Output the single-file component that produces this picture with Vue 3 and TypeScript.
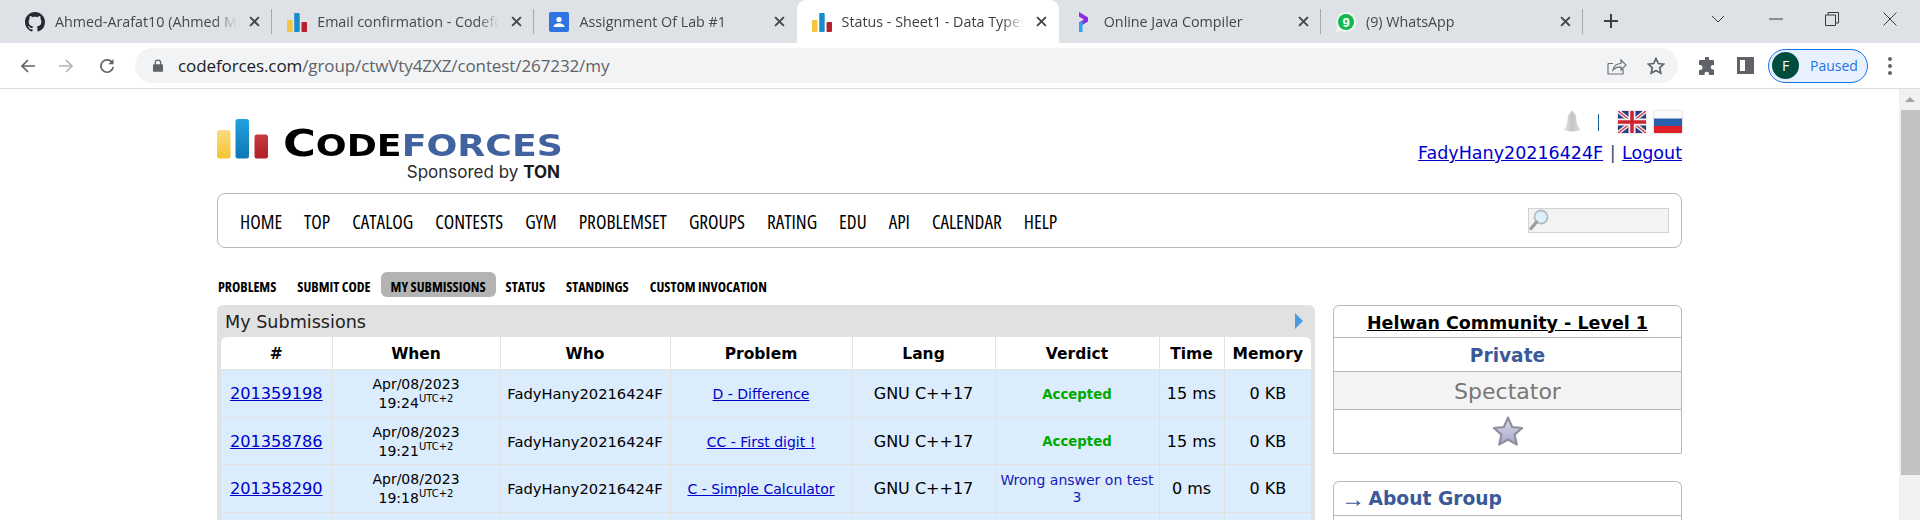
<script setup lang="ts">
interface Tab {
  title: string
  icon: string
  active?: boolean
  sep?: boolean
}

interface Submission {
  id: string
  day: string
  time: string
  who: string
  problem: string
  verdict: string
  accepted: boolean
  runtime: string
  memory: string
}

const tabs: Tab[] = [
  { title: 'Ahmed-Arafat10 (Ahmed M', icon: 'github', sep: true },
  { title: 'Email confirmation - Codefo', icon: 'bars', sep: true },
  { title: 'Assignment Of Lab #1', icon: 'classroom' },
  { title: 'Status - Sheet1 - Data Types', icon: 'bars', active: true },
  { title: 'Online Java Compiler', icon: 'programiz', sep: true },
  { title: '(9) WhatsApp', icon: 'whatsapp', sep: true },
]

const mainMenu = ['HOME', 'TOP', 'CATALOG', 'CONTESTS', 'GYM', 'PROBLEMSET', 'GROUPS', 'RATING', 'EDU', 'API', 'CALENDAR', 'HELP']
const subMenu = ['PROBLEMS', 'SUBMIT CODE', 'MY SUBMISSIONS', 'STATUS', 'STANDINGS', 'CUSTOM INVOCATION']

const rows: Submission[] = [
  { id: '201359198', day: 'Apr/08/2023', time: '19:24', who: 'FadyHany20216424F', problem: 'D - Difference', verdict: 'Accepted', accepted: true, runtime: '15 ms', memory: '0 KB' },
  { id: '201358786', day: 'Apr/08/2023', time: '19:21', who: 'FadyHany20216424F', problem: 'CC - First digit !', verdict: 'Accepted', accepted: true, runtime: '15 ms', memory: '0 KB' },
  { id: '201358290', day: 'Apr/08/2023', time: '19:18', who: 'FadyHany20216424F', problem: 'C - Simple Calculator', verdict: 'Wrong answer on test 3', accepted: false, runtime: '0 ms', memory: '0 KB' },
]

const columns = ['#', 'When', 'Who', 'Problem', 'Lang', 'Verdict', 'Time', 'Memory']
</script>

<template>
  <div class="window">
    <!-- tab strip -->
    <div class="tabstrip">
      <div v-for="tab in tabs" :key="tab.title" class="tab" :class="{ active: tab.active, sep: tab.sep }">
        <svg v-if="tab.icon === 'github'" class="favicon" viewBox="0 0 16 16"><path fill="#24292f" d="M8 0C3.58 0 0 3.58 0 8c0 3.54 2.29 6.53 5.47 7.59.4.07.55-.17.55-.38 0-.19-.01-.82-.01-1.49-2.01.37-2.53-.49-2.69-.94-.09-.23-.48-.94-.82-1.13-.28-.15-.68-.52-.01-.53.63-.01 1.08.58 1.23.82.72 1.21 1.87.87 2.33.66.07-.52.28-.87.51-1.07-1.78-.2-3.64-.89-3.64-3.95 0-.87.31-1.59.82-2.15-.08-.2-.36-1.02.08-2.12 0 0 .67-.21 2.2.82.64-.18 1.32-.27 2-.27.68 0 1.36.09 2 .27 1.53-1.04 2.2-.82 2.2-.82.44 1.1.16 1.92.08 2.12.51.56.82 1.27.82 2.15 0 3.07-1.87 3.75-3.65 3.95.29.25.54.73.54 1.48 0 1.07-.01 1.93-.01 2.2 0 .21.15.46.55.38A8.013 8.013 0 0016 8c0-4.42-3.58-8-8-8z" /></svg>
        <svg v-else-if="tab.icon === 'bars'" class="favicon" viewBox="0 0 20 20">
          <rect x="0" y="8" width="5.500" height="12" rx="1" fill="#f6c43d" />
          <rect x="7.200" y="1" width="5.500" height="19" rx="1" fill="#1b8bcb" />
          <rect x="14.500" y="10" width="5.500" height="10" rx="1" fill="#b8212b" />
        </svg>
        <svg v-else-if="tab.icon === 'classroom'" class="favicon" viewBox="0 0 20 20">
          <rect width="20" height="20" rx="2" fill="#2f74e0" />
          <circle cx="10" cy="7.500" r="2.600" fill="#fff" />
          <path fill="#fff" d="M4.500 15c0-2.600 3-3.800 5.500-3.800s5.500 1.200 5.500 3.800z" />
        </svg>
        <svg v-else-if="tab.icon === 'programiz'" class="favicon" viewBox="0 0 20 20">
          <path fill="#8a2be2" d="M5 0l9 5.500v4L5 15v-4.500l5-3-5-3z" />
          <path fill="#2aa4f4" d="M5 11l3.500-2v11H5z" />
        </svg>
        <svg v-else class="favicon" viewBox="0 0 20 20">
          <path fill="#eef6ef" d="M10 0a10 10 0 0 0-8.600 15L0 20l5.200-1.300A10 10 0 1 0 10 0z" />
          <circle cx="10" cy="10" r="8" fill="#12b84e" />
          <text x="10" y="14.500" class="wa-count">9</text>
        </svg>
        <span class="tab-title">{{ tab.title }}</span>
        <svg class="tab-close" viewBox="0 0 10 10"><path d="M1 1l8 8M9 1l-8 8" /></svg>
      </div>
      <svg class="new-tab" viewBox="0 0 16 16"><path d="M8 1v14M1 8h14" /></svg>
      <div class="window-btns">
        <svg class="win-ico chevron" viewBox="0 0 14 8"><path d="M1 1l6 6 6-6" /></svg>
        <svg class="win-ico minimize" viewBox="0 0 14 14"><path d="M0 7h14" /></svg>
        <svg class="win-ico restore" viewBox="0 0 14 14"><path d="M.5 3h10v10.500H.5zM3 3V.5h10.500V11H11" /></svg>
        <svg class="win-ico win-close" viewBox="0 0 14 14"><path d="M.5.5l13 13M13.500.5l-13 13" /></svg>
      </div>
    </div>

    <!-- toolbar -->
    <div class="toolbar">
      <svg class="nav-ico back" viewBox="0 0 16 16"><path d="M15 8H2M8 2L2 8l6 6" /></svg>
      <svg class="nav-ico forward" viewBox="0 0 16 16"><path d="M1 8h13M8 2l6 6-6 6" /></svg>
      <svg class="nav-ico reload" viewBox="0 0 16 16"><path d="M13.500 5A6.200 6.200 0 1 0 14.200 9" /><path class="fill" d="M14.500 1v5.200H9.300z" /></svg>
      <div class="omnibox">
        <svg class="lock" viewBox="0 0 12 15"><path d="M2 6V4.200a4 4 0 0 1 8 0V6h1a1 1 0 0 1 1 1v7a1 1 0 0 1-1 1H1a1 1 0 0 1-1-1V7a1 1 0 0 1 1-1zm1.500 0h5V4.200a2.500 2.500 0 0 0-5 0z" /></svg>
        <span class="url"><span class="host">codeforces.com</span>/group/ctwVty4ZXZ/contest/267232/my</span>
        <svg class="share" viewBox="0 0 20 18"><path d="M1 6.500v10.500h15v-5M1 6.500h5M6 13c1-4.500 4.500-6.500 8-6.500V3l5 5-5 5V9.800c-3 0-6 1-8 3.200z" /></svg>
        <svg class="star-outline" viewBox="0 0 18 18"><path d="M9 1.500l2.300 5 5.400.6-4 3.700 1.100 5.400L9 13.500l-4.800 2.700 1.100-5.400-4-3.700 5.400-.6z" /></svg>
      </div>
      <svg class="puzzle" viewBox="0 0 18 18"><path d="M7 1a2 2 0 0 1 4 0v2h4a1 1 0 0 1 1 1v4h-1a2.200 2.200 0 0 0 0 4.500h1V17a1 1 0 0 1-1 1h-4v-1a2.200 2.200 0 0 0-4.500 0v1H2a1 1 0 0 1-1-1v-4h1a2.500 2.500 0 0 0 0-5H1V4a1 1 0 0 1 1-1h5z" /></svg>
      <div class="side-panel"><span></span></div>
      <div class="profile">
        <span class="avatar">F</span>
        <span class="paused">Paused</span>
      </div>
      <div class="dots"><i></i><i></i><i></i></div>
    </div>

    <!-- page -->
    <div class="viewport">
      <div class="page">
        <header class="site-header">
          <div class="logo">
            <svg class="logo-bars" viewBox="0 0 51 40">
              <defs>
                <linearGradient id="barY" x1="0" y1="0" x2="0" y2="1"><stop offset="0" stop-color="#fbdc83" /><stop offset="1" stop-color="#f6c32f" /></linearGradient>
                <linearGradient id="barB" x1="0" y1="0" x2="0" y2="1"><stop offset="0" stop-color="#22a1dc" /><stop offset="1" stop-color="#0e76b9" /></linearGradient>
                <linearGradient id="barR" x1="0" y1="0" x2="0" y2="1"><stop offset="0" stop-color="#c73b3f" /><stop offset="1" stop-color="#b11e27" /></linearGradient>
              </defs>
              <rect x="0" y="11" width="13.500" height="28.500" rx="2.500" fill="url(#barY)" />
              <rect x="18.500" y="0" width="13.500" height="39.500" rx="2.500" fill="url(#barB)" />
              <rect x="37.500" y="15.500" width="13.500" height="24" rx="2.500" fill="url(#barR)" />
            </svg>
            <div class="wordmark">
              <div class="brand"><span class="brand-c">C</span><span class="brand-black">ODE</span><span class="brand-blue">FORCES</span></div>
              <div class="sponsor">Sponsored by <b>TON</b></div>
            </div>
          </div>
          <div class="user-area">
            <div class="icons-row">
              <svg class="bell" viewBox="0 0 18 22">
                <defs>
                  <linearGradient id="bellG" x1="0" y1="0" x2="1" y2="0"><stop offset="0" stop-color="#e8e8e8" /><stop offset=".5" stop-color="#c4c4c4" /><stop offset="1" stop-color="#dddddd" /></linearGradient>
                </defs>
                <path fill="url(#bellG)" d="M9 0c1 0 1.500.8 1.500 1.800C13 3 13.200 6 13.500 10c.2 3 1.500 6 3.500 8 .5 1.500-3 2.500-8 2.500S.5 19.500 1 18c2-2 3.300-5 3.500-8 .3-4 .5-7 3-8.200C7.500.8 8 0 9 0z" />
              </svg>
              <span class="bar"></span>
              <svg class="flag flag-uk" viewBox="0 0 28 22">
                <rect width="28" height="22" fill="#2a3a80" />
                <path d="M0 0l28 22M28 0L0 22" stroke="#eee" stroke-width="4" />
                <path d="M0 0l28 22M28 0L0 22" stroke="#d1323f" stroke-width="1.300" />
                <path d="M14 0v22M0 11h28" stroke="#f2f2f2" stroke-width="7" />
                <path d="M14 0v22M0 11h28" stroke="#d1222f" stroke-width="3.500" />
              </svg>
              <svg class="flag flag-ru" viewBox="0 0 28 22">
                <rect width="28" height="7.500" fill="#fafafa" />
                <rect y="7.500" width="28" height="7.500" fill="#2860ae" />
                <rect y="15" width="28" height="7" fill="#e01e26" />
              </svg>
            </div>
            <div class="user-links"><a>FadyHany20216424F</a><span class="pipe">|</span><a>Logout</a></div>
          </div>
        </header>

        <nav class="main-menu">
          <a v-for="item in mainMenu" :key="item">{{ item }}</a>
          <div class="search">
            <svg class="magnifier" viewBox="0 0 20 22">
              <circle cx="12" cy="8" r="6.500" fill="#dcf1fb" stroke="#b5bcc0" stroke-width="1.800" />
              <path d="M7.500 13L2 19.500" stroke="#9c9c9c" stroke-width="3.200" stroke-linecap="round" />
            </svg>
          </div>
        </nav>

        <nav class="sub-menu">
          <a v-for="item in subMenu" :key="item" :class="{ current: item === 'MY SUBMISSIONS' }">{{ item }}</a>
        </nav>

        <div class="columns">
          <section class="panel">
            <div class="panel-title">
              <span>My Submissions</span>
              <svg class="panel-arrow" viewBox="0 0 8 16"><path fill="#4a9be0" d="M0 0l8 8-8 8z" /></svg>
            </div>
            <table class="status">
              <colgroup>
                <col class="c1" /><col class="c2" /><col class="c3" /><col class="c4" />
                <col class="c5" /><col class="c6" /><col class="c7" /><col class="c8" />
              </colgroup>
              <thead>
                <tr><th v-for="col in columns" :key="col">{{ col }}</th></tr>
              </thead>
              <tbody>
                <tr v-for="row in rows" :key="row.id">
                  <td><a class="sub-id">{{ row.id }}</a></td>
                  <td class="when">{{ row.day }}<br />{{ row.time }}<sup>UTC+2</sup></td>
                  <td class="who">{{ row.who }}</td>
                  <td class="problem"><a>{{ row.problem }}</a></td>
                  <td class="lang">GNU C++17</td>
                  <td class="verdict" :class="row.accepted ? 'ok' : 'wrong'">{{ row.verdict }}</td>
                  <td class="lang">{{ row.runtime }}</td>
                  <td class="lang">{{ row.memory }}</td>
                </tr>
                <tr class="next"><td v-for="col in columns" :key="col"></td></tr>
              </tbody>
            </table>
          </section>

          <aside class="sidebar">
            <div class="box">
              <div class="box-row group-name"><a>Helwan Community - Level 1</a></div>
              <div class="box-row private">Private</div>
              <div class="box-row spectator">Spectator</div>
              <div class="box-row star-row">
                <svg class="fav-star" viewBox="0 0 30 30">
                  <defs>
                    <linearGradient id="starG" x1="0" y1="0" x2="0" y2="1"><stop offset="0" stop-color="#dcdce4" /><stop offset="1" stop-color="#a5a6d2" /></linearGradient>
                  </defs>
                  <path fill="url(#starG)" stroke="#8e8f9e" stroke-width="2" stroke-linejoin="round" d="M15 1.500l3.900 8.800 9.300.9-7 6.300 2.100 9.300-8.300-4.800-8.300 4.800 2.100-9.300-7-6.300 9.300-.9z" />
                </svg>
              </div>
            </div>
            <div class="box about">
              <div class="box-row about-title"><span class="arrow">→</span> About Group</div>
              <div class="box-row about-body"></div>
            </div>
          </aside>
        </div>
      </div>

      <div class="scrollbar">
        <div class="scroll-up"><i></i></div>
        <div class="scroll-thumb"></div>
      </div>
    </div>
  </div>
</template>

<style>
html, body { margin: 0; background: #fff; overflow: hidden; }
</style>

<style scoped>
.window { width: 1920px; height: 520px; overflow: hidden; display: flex; flex-direction: column; font-family: "DejaVu Sans", Verdana, sans-serif; color: #000; }

/* ---- tabs ---- */
.tabstrip { height: 43px; background: #dee1e6; display: flex; align-items: stretch; padding-left: 10px; flex: none; }
.tab { width: 262.2px; box-sizing: border-box; display: flex; align-items: center; padding: 0 12px 0 15px; position: relative; font: 14.300px "Open Sans", sans-serif; color: #45474a; flex: none; }
.tab.active { background: #fff; border-radius: 9px 9px 0 0; color: #3c4043; }
.tab.sep::after { content: ""; position: absolute; right: 0; top: 9px; height: 25px; width: 1px; background: #a5a8ad; }
.favicon { width: 20px; height: 20px; flex: none; margin-right: 10px; }
.wa-count { font: bold 13px "Liberation Sans", sans-serif; fill: #fff; text-anchor: middle; }
.tab-title { flex: 1; white-space: nowrap; overflow: hidden; -webkit-mask-image: linear-gradient(to right, #000 88%, transparent 100%); mask-image: linear-gradient(to right, #000 88%, transparent 100%); }
.tab-close { width: 11px; height: 11px; flex: none; margin-left: 12px; }
.tab-close path { stroke: #45474a; stroke-width: 1.800; fill: none; }
.new-tab { width: 16px; height: 16px; margin: 13px 0 0 20px; flex: none; }
.new-tab path { stroke: #3c4043; stroke-width: 2; fill: none; }
.window-btns { flex: 1; display: flex; align-items: flex-start; }
.win-ico { fill: none; stroke: #3a3b3d; stroke-width: 1; flex: none; }
.chevron { width: 14px; height: 8px; margin: 15px 0 0 92px; }
.minimize { width: 14px; height: 14px; margin: 12px 0 0 44px; }
.restore { width: 14px; height: 14px; margin: 12px 0 0 42px; }
.win-close { width: 14px; height: 14px; margin: 12px 0 0 44px; }

/* ---- toolbar ---- */
.toolbar { height: 45px; background: #fff; border-bottom: 1px solid #dadce0; display: flex; align-items: center; flex: none; padding-left: 20px; }
.nav-ico { width: 16px; height: 16px; fill: none; stroke: #5f6368; stroke-width: 1.700; flex: none; }
.nav-ico.forward { stroke: #b4b6b9; margin-left: 22px; }
.nav-ico.reload { margin-left: 25px; }
.nav-ico .fill { fill: #5f6368; stroke: none; }
.omnibox { margin-left: 20px; width: 1543px; height: 35px; box-sizing: border-box; border-radius: 18px; background: #f1f3f4; display: flex; align-items: center; padding-left: 18px; flex: none; }
.lock { width: 10px; height: 13px; fill: #5f6368; flex: none; }
.url { font: 17px "Open Sans", sans-serif; color: #5f6368; margin-left: 15px; flex: 1; letter-spacing: -.1px; }
.host { color: #202124; }
.share { width: 20px; height: 18px; fill: none; stroke: #6e7174; stroke-width: 1.200; flex: none; margin-right: 20px; }
.star-outline { width: 18px; height: 18px; fill: none; stroke: #5f6368; stroke-width: 1.700; flex: none; margin-right: 13px; }
.puzzle { width: 18px; height: 18px; fill: #5f6368; flex: none; margin-left: 20px; }
.side-panel { width: 17px; height: 17px; border: 3px solid #5f6368; box-sizing: border-box; margin-left: 21px; flex: none; display: flex; justify-content: flex-end; }
.side-panel span { width: 6px; background: #5f6368; }
.profile { margin-left: 14px; width: 100px; height: 34px; box-sizing: border-box; border: 1px solid #1a73e8; border-radius: 17px; background: #e8f0fe; display: flex; align-items: center; flex: none; padding-left: 3px; }
.avatar { width: 27px; height: 27px; border-radius: 50%; background: #004d40; color: #fff; font: 14px "Open Sans", sans-serif; display: flex; align-items: center; justify-content: center; }
.paused { color: #1a73e8; font: 14px "Open Sans", sans-serif; margin-left: 11px; }
.dots { margin-left: 20px; display: flex; flex-direction: column; gap: 3px; }
.dots i { width: 4px; height: 4px; border-radius: 50%; background: #5f6368; display: block; }

/* ---- page ---- */
.viewport { flex: 1; min-height: 0; display: flex; }
.page { flex: 1; min-width: 0; padding-left: 217px; box-sizing: border-box; overflow: hidden; }
.page > * { width: 1465px; box-sizing: border-box; }

.site-header { height: 104px; display: flex; justify-content: space-between; }
.logo { display: flex; align-items: flex-start; padding-top: 30px; }
.logo-bars { width: 51px; height: 40px; flex: none; }
.wordmark { margin-left: 15px; width: 277px; margin-top: 7px; }
.brand { font: bold 30px/36px "DejaVu Sans", sans-serif; transform: scaleX(1.21); transform-origin: left; white-space: nowrap; }
.brand-c { font-size: 37px; }
.brand-blue { color: #40629e; }
.sponsor { font: 17px/18px Inter, sans-serif; color: #2b2b2b; text-align: right; margin-top: -1px; }
.sponsor b { color: #1a1a1a; }

.user-area { display: flex; flex-direction: column; align-items: flex-end; }
.icons-row { display: flex; align-items: center; margin-top: 22px; height: 22px; }
.bell { width: 18px; height: 22px; }
.bar { width: 1.500px; height: 17px; background: #1c5c96; margin: 0 19px 0 17px; }
.flag { width: 28px; height: 22px; box-shadow: 0 0 2px #bbb; }
.flag-ru { margin-left: 8px; }
.user-links { margin-top: 9px; font-size: 17.500px; line-height: 22px; white-space: nowrap; }
.user-links a { color: #0000cc; text-decoration: underline; }
.pipe { margin: 0 6.500px; color: #1c4f86; }

.main-menu { height: 55px; border: 1px solid #b9b9b9; border-radius: 8px; display: flex; align-items: center; padding: 0 12px 0 22px; gap: 22px; }
.main-menu a { font-family: "Open Sans", sans-serif; font-size: 19.300px; font-stretch: 75%; color: #000; padding-top: 2px; }
.search { margin-left: auto; width: 141px; height: 25px; box-sizing: border-box; background: #f3f3f3; border: 1px solid #d2d2d2; }
.magnifier { width: 20px; height: 22px; display: block; }

.sub-menu { display: flex; align-items: center; margin-top: 24px; height: 25px; padding-left: 1px; gap: 21px; }
.sub-menu a { font-family: "Open Sans", sans-serif; font-size: 14px; font-weight: bold; font-stretch: 75%; color: #000; padding-top: 4px; }
.sub-menu a.current { background: #b3b3b3; border-radius: 6px; padding: 5px 10px 1px; margin: 0 -11px; }

.columns { display: flex; margin-top: 8px; gap: 18px; align-items: flex-start; }
.panel { width: 1098px; flex: none; background: #e1e1e1; border-radius: 6px 6px 0 0; padding: 0 4px; box-sizing: border-box; }
.panel-title { height: 32px; box-sizing: border-box; display: flex; justify-content: space-between; align-items: center; font-size: 17.600px; color: #222; padding: 2px 8px 0 4px; }
.panel-arrow { width: 8px; height: 16px; margin-top: -2px; }
table.status { width: 1090px; table-layout: fixed; border-collapse: collapse; background: #fff; border-radius: 6px 6px 0 0; }
.c1 { width: 111px; } .c2 { width: 168px; } .c3 { width: 170px; } .c4 { width: 182px; }
.c5 { width: 143px; } .c6 { width: 164px; } .c7 { width: 65px; } .c8 { width: 87px; }
.status th { height: 32px; padding: 2px 0 0; box-sizing: border-box; font-size: 15.500px; font-weight: bold; border-left: 1px solid #e1e1e1; border-bottom: 1px solid #e1e1e1; }
.status th:first-child { border-left: 0; }
.status td { height: 48px; padding: 2px 4px 0; box-sizing: border-box; background: #dbecfd; text-align: center; font-size: 16px; line-height: 16px; border-left: 1px solid #e1e1e1; border-bottom: 1px solid #e1e1e1; }
.status tbody tr:nth-child(2) td { height: 47px; }
.status td:first-child { border-left: 0; }
.status td a { color: #0000cc; text-decoration: underline; }
.status td .sub-id { font-size: 16.200px; }
.status td.who { font-size: 14.700px; }
.status td.when { font-size: 14px; line-height: 19px; }
.when sup { font-size: 10px; line-height: 0; }
.status td.problem { font-size: 14px; }
.status td.verdict { font-size: 14px; line-height: 17px; }
.status td.verdict.ok { color: #00a900; font-weight: bold; font-size: 13.300px; }
.verdict.wrong { color: #1a1ab8; }
.status .next td { height: 40px; }

.sidebar { width: 349px; flex: none; }
.box { border: 1px solid #b9b9b9; border-bottom-width: 1px; border-radius: 6px 6px 0 0; }
.box-row { display: flex; align-items: center; justify-content: center; border-bottom: 1px solid #b9b9b9; box-sizing: border-box; }
.box-row:last-child { border-bottom: 0; }
.group-name { height: 32px; font-size: 17.500px; font-weight: bold; padding-top: 2px; }
.group-name a { color: #000; text-decoration: underline; }
.private { height: 34px; color: #3b5998; font-weight: bold; font-size: 18.600px; padding-top: 1px; }
.spectator { height: 38px; color: #777; background: #f3f3f3; font-size: 22px; padding-top: 2px; }
.star-row { height: 43px; }
.fav-star { width: 32px; height: 32px; }
.about { margin-top: 27px; border-bottom: 0; }
.about-title { height: 34px; justify-content: flex-start; padding-left: 7px; color: #3b5998; font-weight: bold; font-size: 18.700px; white-space: pre; }
.arrow { font: normal 24px/1 "Liberation Sans", sans-serif; letter-spacing: -3px; }
.about-body { height: 40px; }

.scrollbar { width: 21px; flex: none; background: #f1f1f1; display: flex; flex-direction: column; }
.scroll-up { height: 21px; display: flex; justify-content: center; align-items: center; }
.scroll-up i { width: 0; height: 0; border-left: 5px solid transparent; border-right: 5px solid transparent; border-bottom: 5px solid #a3a3a3; }
.scroll-thumb { height: 365px; margin-left: 2px; background: #c1c1c1; }
</style>
